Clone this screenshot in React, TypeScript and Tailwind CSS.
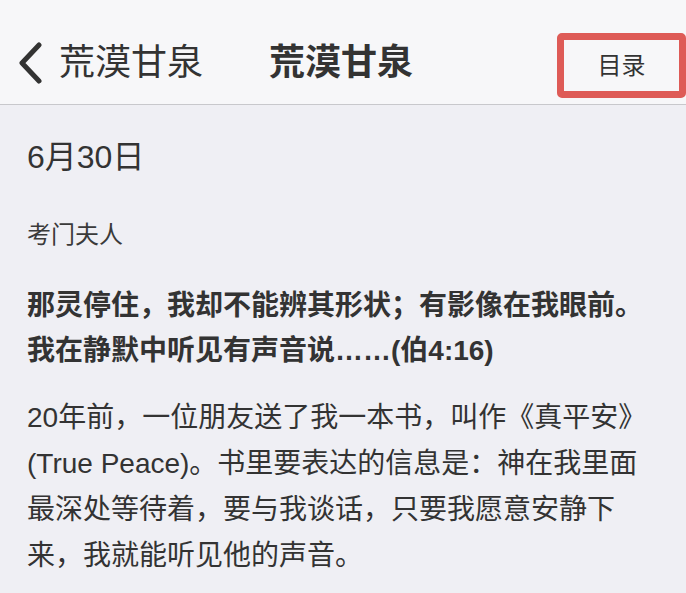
import React from "react";

const font = { fontFamily: '"Liberation Sans", "Noto Sans CJK SC", sans-serif' };

export default function App() {
  return (
    <div className="w-[686px] h-[593px] overflow-hidden bg-[#efeff4] text-[#333333]" style={font}>
      <header className="h-[105px] bg-[#f7f7f9] border-b border-[#c8c8cc] flex items-center pl-[17px] pt-[22px]">
        <svg width="26" height="42" viewBox="0 0 26 42" className="shrink-0">
          <path d="M22 3 L5 21 L22 39" fill="none" stroke="#333333" strokeWidth="5" strokeLinecap="round" strokeLinejoin="round" />
        </svg>
        <span className="ml-[16px] text-[36px] leading-[44px] text-[#333333]">荒漠甘泉</span>
        <span className="ml-[66px] text-[36px] leading-[44px] font-bold text-[#333333]">荒漠甘泉</span>
        <div className="ml-auto self-end mb-[6px] w-[129px] h-[65px] border-[7px] border-[#de5b57] rounded-[5px] flex items-center justify-center">
          <span className="text-[24px] leading-[30px] text-[#333333]">目录</span>
        </div>
      </header>
      <main className="px-[27px]">
        <div className="pt-[32px] text-[32px] leading-[40px]">6月30日</div>
        <div className="mt-[42px] text-[24px] leading-[32px] text-[#3a3a3a]">考门夫人</div>
        <p className="mt-[32px] text-[28px] leading-[45px] font-bold">
          那灵停住，我却不能辨其形状；有影像在我眼前。我在静默中听见有声音说……(伯4:16)
        </p>
        <p className="mt-[22px] text-[28px] leading-[46px]">
          20年前，一位朋友送了我一本书，叫作《真平安》(True Peace)。书里要表达的信息是：神在我里面最深处等待着，要与我谈话，只要我愿意安静下来，我就能听见他的声音。
        </p>
      </main>
    </div>
  );
}
